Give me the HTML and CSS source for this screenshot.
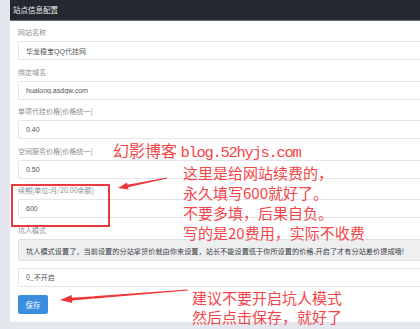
FILE: index.html
```html
<!DOCTYPE html>
<html lang="zh-CN">
<head>
  <meta charset="UTF-8" />
  <title>站点信息配置</title>
  <link rel="stylesheet" href="styles.css">
</head>
<body>
  <div class="panel">
    <div class="panel-heading">站点信息配置</div>
    <form class="panel-body">
      <div class="form-group">
        <label>网站名称</label>
        <input type="text" class="form-control" value="华龙稳宝QQ代挂网" />
      </div>
      <div class="form-group">
        <label>绑定域名</label>
        <input type="text" class="form-control" value="hualong.asdgw.com" />
      </div>
      <div class="form-group">
        <label>单项代挂价格[价格统一]</label>
        <input type="text" class="form-control" value="0.40" />
      </div>
      <div class="form-group">
        <label>空间服务价格[价格统一]</label>
        <input type="text" class="form-control" value="0.50" />
      </div>
      <div class="form-group">
        <label>续期[单位:月/20.00余额]</label>
        <input type="text" class="form-control" value="600" />
      </div>
      <div class="form-group">
        <label>坑人模式</label>
        <div class="alert">坑人模式设置了，当前设置的分站拿货价就由你来设置，站长不能设置低于你所设置的价格.开启了才有分站差价提成哦!</div>
        <select class="form-control">
          <option>0_不开启</option>
          <option>1_开启</option>
        </select>
      </div>
      <button type="submit" class="btn">保存</button>
    </form>
  </div>

  <div class="notes">
    <svg class="marks" width="420" height="329" viewBox="0 0 420 329">
      <rect x="12" y="185" width="97" height="41" fill="none" stroke="#e8393e" stroke-width="2" />
      <polygon fill="#ee3538" points="118,188 128.5,189.4 128,187.2 167.1,178.5 166.9,177.5 127.6,184.8 127.1,182.6" />
      <polygon fill="#ee3538" points="60,300 72.3,303.1 72.1,300.4 188,290.5 188,289.5 71.9,297.8 71.7,295.1" />
    </svg>
    <div class="note note-blog">幻影博客 <span class="mono">blog.52hyjs.com</span></div>
    <div class="note note-renew">
      这里是给网站续费的，<br />
      永久填写600就好了。<br />
      不要多填，后果自负。<br />
      写的是20费用，实际不收费
    </div>
    <div class="note note-save">
      建议不要开启坑人模式<br />
      然后点击保存，就好了
    </div>
  </div>
</body>
</html>
```

FILE: styles.css
```css
body {
  margin: 0;
  height: 329px;
  overflow: hidden;
  background: #e4e8ee;
  font-family: "Noto Sans CJK SC", "Noto Sans", sans-serif;
  position: relative;
}

.panel {
  margin-left: 10px;
  width: 410px;
  background: #fff;
}

.panel-heading {
  height: 20px;
  line-height: 20px;
  padding-left: 3px;
  background: #242931;
  border-bottom: 1px solid #6b7077;
  color: #e8eaed;
  font-size: 7.5px;
}

.panel-body {
  padding: 6px 0 8px 8px;
}

.form-group {
  margin-bottom: 6.6px;
}

.form-group label {
  display: block;
  height: 10px;
  line-height: 10px;
  margin-bottom: 4px;
  font-size: 7px;
  color: #8a8f96;
}

.form-control {
  display: block;
  width: calc(100% + 10px);
  height: 19px;
  box-sizing: border-box;
  padding: 0 7px;
  border: 1px solid #e3e5e8;
  border-radius: 2px;
  background: #fff;
  font-family: "Liberation Sans", "Noto Sans CJK SC", sans-serif;
  font-size: 7px;
  color: #555;
  outline: none;
}

select.form-control {
  appearance: none;
  -webkit-appearance: none;
  font-family: "Noto Sans CJK SC", sans-serif;
  margin-top: 7px;
}

.alert {
  width: calc(100% + 10px);
  height: 22px;
  line-height: 22px;
  box-sizing: border-box;
  padding-left: 7px;
  border: 1px solid #dcdfe3;
  border-radius: 2px;
  background: #eeeff1;
  font-size: 7.2px;
  color: #3a3d42;
  white-space: nowrap;
  overflow: hidden;
}

.btn {
  display: block;
  width: 30px;
  height: 19px;
  margin-top: 8px;
  padding: 0;
  border: none;
  border-radius: 2px;
  background: #3a8ee0;
  color: #fff;
  font-family: "Noto Sans CJK SC", sans-serif;
  font-size: 7.5px;
  cursor: pointer;
}

.notes {
  position: absolute;
  top: 0;
  left: 0;
  width: 420px;
  height: 329px;
  overflow: hidden;
  pointer-events: none;
}

.marks {
  position: absolute;
  top: 0;
  left: 0;
}

.note {
  position: absolute;
  color: #f34548;
  font-size: 15px;
  line-height: 20px;
  white-space: nowrap;
}

.note-blog {
  left: 113px;
  top: 142px;
  height: 17px;
  font-size: 16px;
  line-height: 17px;
}

.mono {
  font-family: "Liberation Mono", monospace;
  font-size: 15.5px;
  line-height: 1;
  letter-spacing: -1.3px;
}

.note-renew {
  left: 183px;
  top: 163px;
}

.note-save {
  left: 192px;
  top: 288px;
  line-height: 19px;
}
```
